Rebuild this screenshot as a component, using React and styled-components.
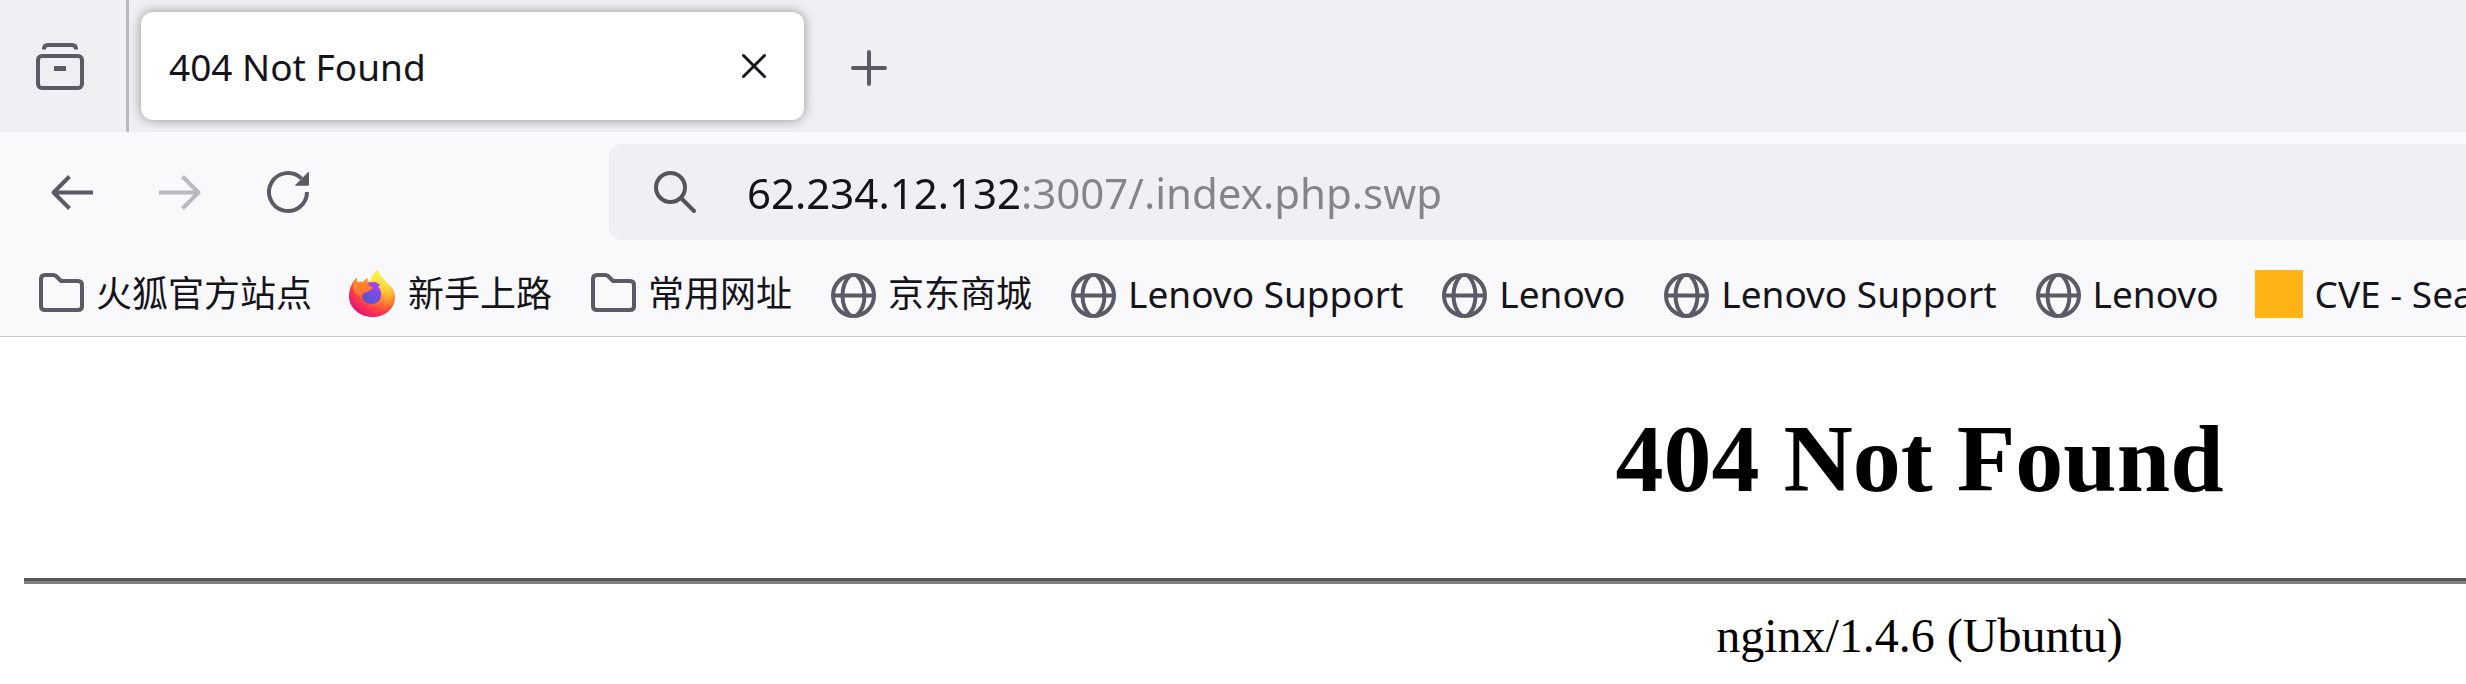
import React from 'react';
import styled, { createGlobalStyle } from 'styled-components';

const GlobalStyle = createGlobalStyle`
  * { box-sizing: border-box; }
  html { overflow: hidden; }
  body {
    margin: 0;
    background: #fff;
    color: #15141a;
    font-family: "Noto Sans", "Noto Sans CJK SC", sans-serif;
  }
`;

const Browser = styled.div`
  min-height: 100vh;
  overflow: hidden;
`;

const TabStrip = styled.div`
  display: flex;
  align-items: center;
  height: 132px;
  overflow: hidden;
  background: #f0eff4;
`;

const IconButton = styled.button`
  display: flex;
  flex: none;
  align-items: center;
  justify-content: center;
  width: ${(p) => p.$size || 96}px;
  height: ${(p) => p.$size || 96}px;
  padding: 0;
  border: 0;
  border-radius: 12px;
  background: transparent;
  color: #5b5b66;

  &:disabled { color: #bab9c0; }
`;

const ViewArea = styled.div`
  display: flex;
  flex: none;
  align-items: center;
  height: 100%;
  padding: 0 18px 0 12px;
  border-right: 3px solid #bab9c0;
`;

const Tab = styled.div`
  display: flex;
  align-items: center;
  justify-content: space-between;
  width: 663px;
  height: 108px;
  margin: 0 15px 0 12px;
  padding: 0 14px 0 28px;
  border-radius: 12px;
  background: #fff;
  box-shadow: 0 0 12px rgba(0, 0, 0, 0.4);
  color: #15141a;
  font-size: 37px;
  white-space: nowrap;

  ${IconButton} { color: #15141a; }
`;

const NavBar = styled.div`
  display: flex;
  align-items: center;
  gap: 12px;
  height: 120px;
  padding-left: 24px;
  background: #f9f9fb;
`;

const UrlBar = styled.label`
  display: flex;
  flex: 1;
  align-items: center;
  gap: 48px;
  height: 96px;
  margin-left: 261px;
  padding-left: 42px;
  border-radius: 12px 0 0 12px;
  background: #f0eff4;
  color: #55545a;
`;

/* The host part is dark and the rest of the address is dimmed. */
const UrlInput = styled.input`
  flex: 1;
  min-width: 0;
  height: 72px;
  padding: 0;
  border: 0;
  outline: 0;
  background: linear-gradient(to right, #15141a 274px, #858589 274px);
  -webkit-background-clip: text;
  background-clip: text;
  -webkit-text-fill-color: transparent;
  color: #15141a;
  font-family: inherit;
  font-size: 42px;
`;

const Bookmarks = styled.nav`
  display: flex;
  align-items: center;
  gap: 36px;
  height: 85px;
  padding-left: 36px;
  overflow: hidden;
  border-bottom: 1px solid #cccccc;
  background: #f9f9fb;
`;

const Bookmark = styled.a`
  display: flex;
  flex: none;
  align-items: center;
  gap: 12px;
  color: #15141a;
  font-size: ${(p) => (p.$cjk ? 36 : 37)}px;
  line-height: 48px;
  text-decoration: none;
  white-space: nowrap;
`;

const Favicon = styled.span`
  width: 48px;
  height: 48px;
  background: #ffb416;
`;

/* The document is laid out wider than the window and runs off its right edge. */
const Document = styled.main`
  width: 156vw;
  padding: 67px 32px 0 24px;
  color: #000;
  font-family: "Liberation Serif", serif;
  text-align: center;
`;

const Title = styled.h1`
  margin: 0 0 64px;
  font-size: 96px;
  font-weight: 700;
  line-height: 110px;
`;

const Rule = styled.hr`
  height: 6px;
  margin: 0 0 24px;
  border: 0;
  border-top: 3px solid #555555;
  border-bottom: 3px solid #808080;
`;

const Server = styled.p`
  margin: 0;
  font-size: 48px;
  line-height: 56px;
`;

const Icon = styled.svg.attrs({ viewBox: '0 0 48 48', 'aria-hidden': true })`
  display: block;
  flex: none;
  width: 48px;
  height: 48px;
  fill: none;
  stroke: currentColor;
  stroke-width: 4;
`;

const MarkIcon = styled(Icon)`
  color: #5b5b66;
`;

const LogoIcon = styled(Icon)`
  stroke: none;
`;

const ViewIcon = () => (
  <Icon>
    <path d="M8 7.5V7q0-4 4-4h24q4 0 4 4v.5" />
    <rect x="2" y="14" width="44" height="32" rx="4" />
    <path d="M18 26.5h12" strokeWidth="5" />
  </Icon>
);

const CloseIcon = () => (
  <Icon>
    <path d="M13.5 13.5l21 21M34.5 13.5l-21 21" strokeWidth="3" strokeLinecap="round" />
  </Icon>
);

const PlusIcon = () => (
  <Icon>
    <path d="M26 10v32M10 26h32" strokeLinecap="round" />
  </Icon>
);

const BackIcon = () => (
  <Icon>
    <path d="M45 24.5H6M21.5 8.5L5.5 24.5l16 16" strokeLinejoin="round" />
  </Icon>
);

const ForwardIcon = () => (
  <Icon>
    <path d="M3 24.5h39M26.5 8.5l16 16-16 16" strokeLinejoin="round" />
  </Icon>
);

const ReloadIcon = () => (
  <Icon>
    <path d="M43 24A19 19 0 1 1 37.5 10.6" />
    <path d="M44.5 4.2v13h-13z" fill="currentColor" strokeWidth="1" strokeLinejoin="round" />
  </Icon>
);

const SearchIcon = () => (
  <Icon>
    <circle cx="19.5" cy="19.5" r="14.5" />
    <path d="M30 30l13 13" strokeLinecap="round" />
  </Icon>
);

const FolderIcon = () => (
  <MarkIcon>
    <path d="M5 9q0-4 4-4h8q2 0 3 1l5 5H42q4 0 4 4v21q0 4-4 4H9q-4 0-4-4z" />
  </MarkIcon>
);

const GlobeIcon = () => (
  <MarkIcon>
    <circle cx="25.5" cy="25.5" r="20.5" />
    <path d="M5 25.5h41M22 5.5c-10 10-10 30 0 40M29 5.5c10 10 10 30 0 40" />
  </MarkIcon>
);

const FirefoxIcon = () => (
  <LogoIcon>
    <defs>
      <radialGradient id="fxBody" gradientUnits="userSpaceOnUse" cx="38" cy="6" r="46">
        <stop offset="0" stopColor="#fff14f" />
        <stop offset="0.3" stopColor="#ffc02d" />
        <stop offset="0.55" stopColor="#ff8030" />
        <stop offset="0.78" stopColor="#ff3a48" />
        <stop offset="1" stopColor="#e3127c" />
      </radialGradient>
      <linearGradient id="fxFlame" gradientUnits="userSpaceOnUse" x1="30" y1="0" x2="36" y2="42">
        <stop offset="0" stopColor="#fff24c" />
        <stop offset="0.4" stopColor="#ffdc3c" />
        <stop offset="1" stopColor="#ff8a2a" stopOpacity="0" />
      </linearGradient>
      <linearGradient id="fxGlobe" x1="0.8" y1="0" x2="0.3" y2="1">
        <stop offset="0" stopColor="#b83cf0" />
        <stop offset="0.45" stopColor="#7a4be8" />
        <stop offset="1" stopColor="#5058c8" />
      </linearGradient>
      <linearGradient id="fxHead" x1="0" y1="0" x2="0.3" y2="1">
        <stop offset="0" stopColor="#ff9a20" />
        <stop offset="1" stopColor="#ff6a38" />
      </linearGradient>
    </defs>
    <path fill="url(#fxBody)" d="M9 7.5C8.500 10 9 11 9.500 12.500 12 11.500 14 11.500 16 12l7-1c1-5 4-9 7-11 1 6 5 8 9 13 5 4 8 8 8 14 0 12-10 20-22.500 20S1 38 1 26.500C1 19 4 12 9 7.500z" />
    <path fill="url(#fxFlame)" d="M30 0c1 6 5 8 9 13 5 5 7 10 6 16-1 5-5 10-10 12 3-7 2-15-2-20-3-4-10-5-11-9 1-5 4-10 8-12z" />
    <path fill="url(#fxGlobe)" d="M17 15c2-2 5-3 8-3 4 0 7 2 7 4-1 0-2 0-2 .5 2 2 3 4 3 8 0 6-4 9.500-9.500 9.500S14 30 14 25c0-4 1-7 3-10z" />
    <path fill="url(#fxHead)" d="M9 7.5C8.500 10 9 11 9.500 12.500c3-1 4-1 6-.5 1-2 3-3.500 4-4 0 3 0 5 1.500 7 1 1.500 3 1.500 4 2 0 2-2 2.500-4 4-1.500 1-4 1.500-5.500 2.500-1 1-1.500 2-1.500 3.500-5-2-9-5-9-10 0-4 2-8 4-9.500z" />
  </LogoIcon>
);

const marks = [
  { icon: FolderIcon, label: '火狐官方站点', cjk: true },
  { icon: FirefoxIcon, label: '新手上路', cjk: true },
  { icon: FolderIcon, label: '常用网址', cjk: true },
  { icon: GlobeIcon, label: '京东商城', cjk: true },
  { icon: GlobeIcon, label: 'Lenovo Support' },
  { icon: GlobeIcon, label: 'Lenovo' },
  { icon: GlobeIcon, label: 'Lenovo Support' },
  { icon: GlobeIcon, label: 'Lenovo' },
  { icon: Favicon, label: 'CVE - Sea' },
];

export default function App() {
  return (
    <Browser>
      <GlobalStyle />
      <TabStrip>
        <ViewArea>
          <IconButton aria-label="Firefox View"><ViewIcon /></IconButton>
        </ViewArea>
        <Tab>
          <span>404 Not Found</span>
          <IconButton $size={72} aria-label="Close tab"><CloseIcon /></IconButton>
        </Tab>
        <IconButton aria-label="New tab"><PlusIcon /></IconButton>
      </TabStrip>
      <NavBar>
        <IconButton aria-label="Back"><BackIcon /></IconButton>
        <IconButton aria-label="Forward" disabled><ForwardIcon /></IconButton>
        <IconButton aria-label="Reload"><ReloadIcon /></IconButton>
        <UrlBar>
          <SearchIcon />
          <UrlInput aria-label="Address" defaultValue="62.234.12.132:3007/.index.php.swp" spellCheck={false} />
        </UrlBar>
      </NavBar>
      <Bookmarks aria-label="Bookmarks">
        {marks.map(({ icon: Mark, label, cjk }, i) => (
          <Bookmark key={i} href="#" $cjk={cjk}>
            <Mark />
            <span>{label}</span>
          </Bookmark>
        ))}
      </Bookmarks>
      <Document>
        <Title>404 Not Found</Title>
        <Rule />
        <Server>nginx/1.4.6 (Ubuntu)</Server>
      </Document>
    </Browser>
  );
}
